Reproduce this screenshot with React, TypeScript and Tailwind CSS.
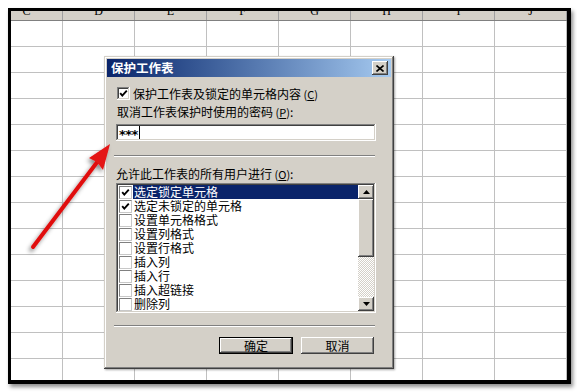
const cols = ['C', 'D', 'E', 'F', 'G', 'H', 'I', 'J'];
const rows = Array.from({ length: 14 }, (_, i) => i);

const items = [
  { label: '选定锁定单元格', checked: true, selected: true },
  { label: '选定未锁定的单元格', checked: true },
  { label: '设置单元格格式' },
  { label: '设置列格式' },
  { label: '设置行格式' },
  { label: '插入列' },
  { label: '插入行' },
  { label: '插入超链接' },
  { label: '删除列' },
];

const raised =
  'shadow-[inset_-1px_-1px_#404040,inset_1px_1px_#ffffff,inset_-2px_-2px_#808080,inset_2px_2px_#d4d0c8]';
const sunken =
  'shadow-[inset_-1px_-1px_#ffffff,inset_1px_1px_#808080,inset_-2px_-2px_#d4d0c8,inset_2px_2px_#404040]';

function Check() {
  return (
    <svg width="9" height="9" viewBox="0 0 9 9" className="block">
      <polyline points="1.2,4.2 3.3,6.6 7.8,1.6" fill="none" stroke="#000" strokeWidth="1.9" />
    </svg>
  );
}

function Box({ checked, flat }: { checked?: boolean; flat?: boolean }) {
  return (
    <div
      className={
        'w-[13px] h-[13px] shrink-0 bg-white flex items-center justify-center ' +
        (flat
          ? 'border-t border-l border-[#808080] border-r-[#c8c8c8] border-b-[#c8c8c8] border-r border-b'
          : sunken)
      }
    >
      {checked && <Check />}
    </div>
  );
}

function Key({ k }: { k: string }) {
  return (
    <span className="text-[11px]">
      {' '}(<span className="underline">{k}</span>)
    </span>
  );
}

function Separator() {
  return (
    <div className="-ml-[2px] mr-[1px] h-[2px] border-t border-[#808080] border-b border-b-white" />
  );
}

function Arrow({ down }: { down?: boolean }) {
  return (
    <div className={'w-[16px] h-[14px] bg-[#d4d0c8] flex items-center justify-center ' + raised}>
      <svg width="7" height="4" viewBox="0 0 7 4" className="block">
        <polygon points={down ? '0,0 7,0 3.5,4' : '0,4 7,4 3.5,0'} fill="#000" />
      </svg>
    </div>
  );
}

function Sheet() {
  return (
    <div className="ml-[8px] mt-[8px] w-[563px] h-[376px] border-black border-t-[3px] border-l-[3px] border-r-[4px] border-b-[4px] shadow-[2px_3px_4px_rgba(0,0,0,0.45)] overflow-hidden bg-white">
      <div className="-ml-[20px] w-[576px]">
        <div className="flex h-[10px] bg-[#d4d0c8] border-b border-[#808080]">
          {cols.map((c) => (
            <div
              key={c}
              className="w-[72px] shrink-0 border-r border-[#a0a0a0] overflow-hidden flex justify-center items-start"
            >
              <span className="-mt-[6px] leading-[12px] text-[12px] text-black font-['Liberation_Serif',serif]">
                {c}
              </span>
            </div>
          ))}
        </div>
        {rows.map((r) => (
          <div key={r} className="flex h-[26px]">
            {cols.map((c) => (
              <div key={c} className="w-[72px] shrink-0 border-r border-b border-[#c0c0c0]" />
            ))}
          </div>
        ))}
      </div>
    </div>
  );
}

function Dialog() {
  return (
    <div
      className={
        'absolute left-[104px] top-[56px] w-[290px] h-[313px] bg-[#d4d0c8] p-[3px] text-black ' +
        "text-[12px] font-['Noto_Sans_CJK_SC','Noto_Sans',sans-serif] shadow-[inset_-1px_-1px_#404040,inset_1px_1px_#d4d0c8,inset_-2px_-2px_#808080,inset_2px_2px_#ffffff,1px_1px_2px_rgba(0,0,0,0.35)]"
      }
    >
      {/* title bar */}
      <div className="h-[18px] flex items-center justify-between pl-[4px] pr-[3px] bg-gradient-to-r from-[#0a246a] to-[#a6caf0]">
        <span className="text-white font-bold text-[12.5px] leading-[14px]">保护工作表</span>
        <div className={'w-[16px] h-[14px] bg-[#d4d0c8] flex items-center justify-center ' + raised}>
          <svg width="8" height="7" viewBox="0 0 8 7" className="block">
            <path d="M0.5 0.5 L7.5 6.5 M7.5 0.5 L0.5 6.5" stroke="#000" strokeWidth="1.6" />
          </svg>
        </div>
      </div>

      {/* body */}
      <div className="pl-[9px] pr-[15px]">
        <div className="mt-[10px] ml-[1px] h-[13px] flex items-center gap-[3px] leading-[14px]">
          <Box checked />
          <span>
            保护工作表及锁定的单元格内容<Key k="C" />
          </span>
        </div>

        <div className="mt-[5px] ml-[1px] h-[14px] leading-[14px]">
          取消工作表保护时使用的密码<Key k="P" />:
        </div>

        <div className={'mt-[5px] h-[17px] bg-white flex items-center pl-[3px] ' + sunken}>
          <span className="font-['DejaVu_Sans',sans-serif] font-bold text-[13px] leading-[12px] tracking-[-0.5px] mt-[4px]">
            ***
          </span>
          <span className="w-px h-[13px] bg-black ml-[1px]" />
        </div>

        <div className="mt-[14px]">
          <Separator />
        </div>

        <div className="mt-[10px] h-[14px] leading-[14px]">
          允许此工作表的所有用户进行<Key k="O" />:
        </div>

        <div className={'mt-[2px] h-[130px] bg-white p-[2px] flex ' + sunken}>
          <div className="flex-1 flex flex-col">
            {items.map((it) => (
              <div key={it.label} className="h-[14px] flex items-center pl-[1px]">
                <Box checked={it.checked} flat />
                <div
                  className={
                    'ml-[1px] flex-1 h-[14px] leading-[14px] pl-[1px] overflow-hidden ' +
                    (it.selected ? 'bg-[#0a246a] text-white' : '')
                  }
                >
                  {it.label}
                </div>
              </div>
            ))}
          </div>
          <div className="w-[16px] flex flex-col">
            <Arrow />
            <div className={'h-[58px] bg-[#d4d0c8] ' + raised} />
            <div className="flex-1 bg-[repeating-conic-gradient(#ffffff_0_25%,#d4d0c8_0_50%)] bg-[length:2px_2px]" />
            <Arrow down />
          </div>
        </div>

        <div className="mt-[12px]">
          <Separator />
        </div>

        <div className="mt-[10px] flex justify-end gap-[8px] pr-[2px]">
          <div className="w-[74px] h-[17px] border border-black">
            <div className={'w-full h-full bg-[#d4d0c8] flex items-center justify-center leading-[14px] ' + raised}>
              确定
            </div>
          </div>
          <div
            className={'w-[73px] h-[17px] bg-[#d4d0c8] flex items-center justify-center leading-[14px] ' + raised}
          >
            取消
          </div>
        </div>
      </div>
    </div>
  );
}

function RedArrow() {
  return (
    <svg className="absolute inset-0 pointer-events-none" width="577" height="392" viewBox="0 0 577 392">
      <defs>
        <filter id="sh" x="-50%" y="-50%" width="200%" height="200%">
          <feDropShadow dx="-2" dy="3" stdDeviation="2" floodColor="#000" floodOpacity="0.45" />
        </filter>
      </defs>
      <g filter="url(#sh)">
        <line x1="33" y1="247" x2="98" y2="161" stroke="#e01010" strokeWidth="4" strokeLinecap="round" />
        <polygon points="110,144 103,170 97,162 89,158" fill="#e41414" />
      </g>
    </svg>
  );
}

export default function App() {
  return (
    <div className="relative w-[577px] h-[392px] bg-white overflow-hidden">
      <Sheet />
      <Dialog />
      <RedArrow />
    </div>
  );
}
